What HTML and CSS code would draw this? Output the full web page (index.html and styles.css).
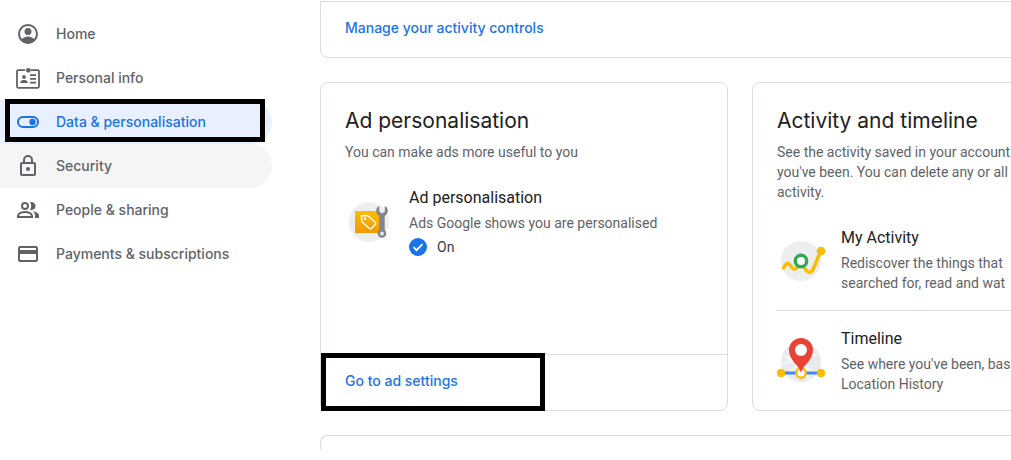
FILE: index.html
```html
<!DOCTYPE html>
<html lang="en-GB">
<head>
<meta charset="utf-8">
<meta name="viewport" content="width=device-width, initial-scale=1">
<title>Data &amp; personalisation</title>
<link rel="stylesheet" href="styles.css">
</head>
<body>
<div class="page">
  <nav class="sidebar" aria-label="Account">
    <a class="nav-item" href="#home">
      <svg class="nav-icon" viewBox="0 0 24 24"><circle cx="12" cy="12" r="9" fill="none" stroke="currentColor" stroke-width="2"/><circle cx="12" cy="9.500" r="3.500" fill="currentColor"/><path d="M5 18.200C6.600 15.800 9.300 14.500 12 14.500s5.400 1.300 7 3.700A9.500 9.500 0 0 1 5 18.200z" fill="currentColor"/></svg>
      Home
    </a>
    <a class="nav-item" href="#info">
      <svg class="nav-icon" viewBox="0 0 24 24"><path d="M9 4.200H2.200a1.200 1.200 0 0 0-1.200 1.200v15.200a1.200 1.200 0 0 0 1.200 1.200h19.600a1.200 1.200 0 0 0 1.200-1.200V5.400a1.200 1.200 0 0 0-1.200-1.200H15" fill="none" stroke="currentColor" stroke-width="1.800"/><circle cx="12.300" cy="4.300" r="2.400" fill="currentColor"/><circle cx="8" cy="11" r="1.900" fill="currentColor"/><path d="M4.300 17v-1c0-1.500 2.400-2.100 3.700-2.100s3.700.6 3.700 2.100v1zM14 8.300h6V10h-6zM14 12h6v1.700h-6zM14 15.700h6v1.700h-6z" fill="currentColor"/></svg>
      Personal info
    </a>
    <a class="nav-item nav-item-active" href="#data" aria-current="page">
      <svg class="nav-icon" viewBox="0 0 24 24"><rect x="2" y="7" width="20" height="10" rx="5" fill="none" stroke="currentColor" stroke-width="2"/><circle cx="16.500" cy="12" r="3.200" fill="currentColor"/></svg>
      Data &amp; personalisation
      <span class="highlight highlight-nav"></span>
    </a>
    <a class="nav-item nav-item-hover" href="#security">
      <svg class="nav-icon" viewBox="0 0 24 24"><rect x="5" y="9" width="14" height="12" rx="1" fill="none" stroke="currentColor" stroke-width="2"/><path d="M8 9V6a4 4 0 0 1 8 0v3" fill="none" stroke="currentColor" stroke-width="2"/><circle cx="12" cy="15" r="2" fill="currentColor"/></svg>
      Security
    </a>
    <a class="nav-item" href="#people">
      <svg class="nav-icon" viewBox="0 0 24 24"><g fill="none" stroke="currentColor" stroke-width="2"><circle cx="9" cy="8" r="3"/><path d="M2 19v-1.300C2 15.300 6.300 14 9 14s7 1.300 7 3.700V19z"/></g><path d="M14 4.300a4 4 0 1 1 0 7.400c1.600-2 1.600-5.400 0-7.400zM17 13.200c3 .5 6 2 6 4.500V20h-4v-2.300c0-1.800-.8-3.300-2-4.500z" fill="currentColor"/></svg>
      People &amp; sharing
    </a>
    <a class="nav-item" href="#payments">
      <svg class="nav-icon" viewBox="0 0 24 24"><rect x="3" y="5" width="18" height="14" rx="1" fill="none" stroke="currentColor" stroke-width="2"/><path d="M3 8h18v4H3z" fill="currentColor"/></svg>
      Payments &amp; subscriptions
    </a>
  </nav>

  <main class="cards">
    <section class="card card-wide card-top">
      <a class="card-link" href="#controls">Manage your activity controls</a>
    </section>

    <section class="card">
      <div class="card-body">
        <h2 class="card-title">Ad personalisation</h2>
        <p class="text">You can make ads more useful to you</p>
        <div class="item">
          <svg class="item-icon" viewBox="0 0 48 48">
            <defs><linearGradient id="folder" x1="0" y1="0" x2="0" y2="1"><stop offset="0" stop-color="#fbbc04"/><stop offset="1" stop-color="#f29900"/></linearGradient></defs>
            <circle cx="24" cy="25" r="20" fill="#eceef0"/>
            <path d="M10 14h25v22H10z" fill="url(#folder)"/>
            <path d="M17 18.500q-.8 0-.7 1l.8 5.500 7.400 6.600q1 .8 1.800 0l4.200-4.400q.8-1-.1-1.800L23 18.700z" fill="none" stroke="#fff" stroke-width="1.400" stroke-linejoin="round"/>
            <circle cx="20" cy="21.800" r="1.200" fill="#fff"/>
            <path d="M34.300 18h5.400v16h-5.400z" fill="#80868b"/>
            <path d="M34.200 9v5.400l2.800 2 2.800-2V9c2 .9 3 2.700 3 4.700 0 3.300-2.500 5.700-5.800 5.700s-5.800-2.400-5.800-5.700c0-2 1-3.800 3-4.700z" fill="#80868b"/>
            <circle cx="37" cy="36.500" r="4.300" fill="#80868b"/><circle cx="37" cy="36.500" r="1.900" fill="#e8eaed"/>
          </svg>
          <div class="item-copy">
            <h3 class="item-title">Ad personalisation</h3>
            <p class="text">Ads Google shows you are personalised</p>
            <p class="status">
              <svg class="status-icon" viewBox="0 0 18 18"><circle cx="9" cy="9" r="9" fill="#1a73e8"/><path d="M4.500 9.200l3 3 6-6" fill="none" stroke="#fff" stroke-width="1.700"/></svg>
              On
            </p>
          </div>
        </div>
      </div>
      <div class="card-footer">
        <a class="card-link" href="#ads">Go to ad settings</a>
        <span class="highlight highlight-link"></span>
      </div>
    </section>

    <section class="card">
      <div class="card-body">
        <h2 class="card-title">Activity and timeline</h2>
        <p class="text">See the activity saved in your account<br>you've been. You can delete any or all<br>activity.</p>
        <div class="item">
          <svg class="item-icon" viewBox="0 0 48 48">
            <circle cx="24" cy="24" r="20" fill="#eceef0"/>
            <path d="M6.500 31C8 27.500 10.500 24.500 13 28s3.500 5.500 6.500 3 3.500-4 5.500-3 4 7.500 7.500 7.500 5-7 11-21" fill="none" stroke="#fbbc04" stroke-width="3.500" stroke-linecap="round"/>
            <circle cx="44" cy="14" r="4.300" fill="#fbbc04"/>
            <circle cx="24" cy="24" r="5.700" fill="#fff" stroke="#34a853" stroke-width="3.400"/>
          </svg>
          <div class="item-copy">
            <h3 class="item-title">My Activity</h3>
            <p class="text">Rediscover the things that<br>searched for, read and wat</p>
          </div>
        </div>
        <div class="item item-divided">
          <svg class="item-icon" viewBox="0 0 48 48">
            <circle cx="24" cy="24" r="20" fill="#e8eaed"/>
            <path d="M7 18l34 18M11 37l25-28M20 5l12 38M5 26l35-10" stroke="#f6f7f8" stroke-width="2" fill="none"/>
            <path d="M4 35h40" stroke="#4285f4" stroke-width="3"/>
            <circle cx="4" cy="35" r="4.300" fill="#fbbc04"/><circle cx="44" cy="35" r="4.300" fill="#fbbc04"/>
            <circle cx="24" cy="35" r="4.700" fill="#fff" stroke="#fbbc04" stroke-width="2.400"/>
            <path d="M24 35c-1.500-8-12-12-12-23a12 12 0 0 1 24 0c0 11-10.500 15-12 23z" fill="#ea4335"/>
            <circle cx="24" cy="12" r="6" fill="#fff"/>
          </svg>
          <div class="item-copy">
            <h3 class="item-title">Timeline</h3>
            <p class="text">See where you've been, bas<br>Location History</p>
          </div>
        </div>
      </div>
    </section>

    <section class="card card-wide card-next"></section>
  </main>
</div>
</body>
</html>
```
FILE: styles.css
```css
* {
  box-sizing: border-box;
}

body {
  margin: 0;
  background: #fff;
  color: #202124;
  font-family: Roboto, "Liberation Sans", sans-serif;
  font-size: 14px;
  line-height: 20px;
}

h2,
h3,
p {
  margin: 0;
}

.page {
  display: grid;
  grid-template-columns: 272px minmax(0, 1fr);
  column-gap: 48px;
  overflow: hidden;
}

.sidebar {
  padding-top: 12px;
}

.nav-item {
  position: relative;
  display: flex;
  align-items: center;
  gap: 16px;
  height: 44px;
  padding-left: 16px;
  border-radius: 0 22px 22px 0;
  color: #5f6368;
  font-family: Inter, sans-serif;
  font-weight: 500;
  text-decoration: none;
}

.nav-item-active {
  background: #e8f0fe;
  color: #1a73e8;
}

.nav-item-hover {
  background: #f5f5f5;
}

.nav-icon {
  flex: none;
  width: 24px;
  height: 24px;
}

.cards {
  display: grid;
  grid-template-columns: repeat(2, minmax(408px, 1fr));
  gap: 24px;
}

.card {
  display: flex;
  flex-direction: column;
  border: 1px solid #dadce0;
  border-radius: 8px;
  white-space: nowrap;
}

.card-wide {
  grid-column: 1 / -1;
}

.card-top {
  margin-top: 1px;
  padding: 16px 24px 19px;
  border-radius: 0 0 8px 8px;
}

.card-next {
  height: 15px;
  border-bottom: 0;
  border-radius: 8px 8px 0 0;
}

.card-body {
  flex: 1;
  padding: 24px 24px 16px;
}

.card-title {
  margin-bottom: 7px;
  font-family: Inter, sans-serif;
  font-size: 21px;
  font-weight: 400;
  line-height: 28px;
}

.text {
  color: #5f6368;
}

.item {
  display: flex;
  gap: 16px;
  padding: 24px 0 17px;
}

.item-divided {
  padding: 16px 0 0;
  border-top: 1px solid #dadce0;
}

.item-icon {
  flex: none;
  width: 48px;
  height: 48px;
  margin-top: 11px;
  overflow: visible;
}

.item-title {
  margin-bottom: 3px;
  font-size: 16px;
  font-weight: 400;
  line-height: 24px;
}

.status {
  display: flex;
  align-items: center;
  gap: 10px;
  margin-top: 4px;
  color: #3c4043;
}

.status-icon {
  width: 18px;
  height: 18px;
}

.card-footer {
  position: relative;
  padding: 16px 24px 19px;
  border-top: 1px solid #dadce0;
}

.card-link {
  color: #1a73e8;
  font-family: Inter, sans-serif;
  font-weight: 500;
  text-decoration: none;
}

.highlight {
  position: absolute;
  border: 5px solid #000;
  pointer-events: none;
}

.highlight-nav {
  inset: -1px 7px 2px 5px;
}

.highlight-link {
  top: -2px;
  bottom: -1px;
  left: 0;
  width: 224px;
}
```
